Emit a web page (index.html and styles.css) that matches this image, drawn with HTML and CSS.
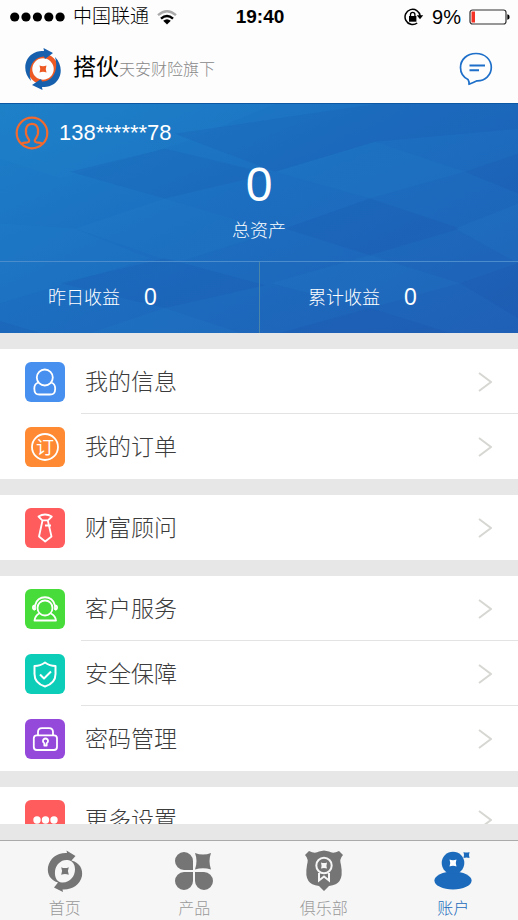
FILE: index.html
```html
<!DOCTYPE html>
<html lang="zh-CN">
<head>
<meta charset="utf-8">
<meta name="viewport" content="width=device-width, initial-scale=1">
<title>搭伙 - 账户</title>
<link rel="stylesheet" href="styles.css">
</head>
<body>
<div class="status">
  <div class="status-left">
    <svg width="55" height="10" viewBox="0 0 55 10"><circle cx="4.7" cy="5" r="4.6"/><circle cx="16" cy="5" r="4.6"/><circle cx="27.4" cy="5" r="4.6"/><circle cx="38.8" cy="5" r="4.6"/><circle cx="50.1" cy="5" r="4.6"/></svg>
    <span class="carrier">中国联通</span>
    <svg width="20" height="15" viewBox="0 0 20 15"><g fill="none" stroke-width="2.4"><path d="M1 5.2Q10-2.6 19 5.2" stroke="#aaa"/><path d="M4 8.6Q10 3.2 16 8.6" stroke="#000"/></g><path d="M6.2 10.8Q10 7.600 13.800 10.800L10 14.600Z"/></svg>
  </div>
  <span class="clock">19:40</span>
  <div class="status-right">
    <svg width="20" height="18" viewBox="0 0 20 18"><path d="M13.200 15A7.600 7.600 0 1 1 16.200 8" fill="none" stroke="#000" stroke-width="1.500"/><path d="M12.800 7.300h6.400L16 11.300Z"/><path d="M5 8h7.400v5.700H5Z"/><path d="M6.500 8V6.500a2.200 2.200 0 0 1 4.400 0V8" fill="none" stroke="#000" stroke-width="1.300"/></svg>
    <span class="percent">9%</span>
    <svg width="41" height="16" viewBox="0 0 41 16"><rect x="1" y="1" width="36" height="14" rx="2.500" fill="none" stroke="#333" stroke-width="1.200"/><rect x="2.500" y="2.500" width="3.500" height="11" fill="#f53226"/><path d="M38.300 5.200Q40.600 5.500 40.600 8T38.300 10.800Z"/></svg>
  </div>
</div>

<header class="header">
  <svg class="logo" width="36" height="44" viewBox="0 0 36 44">
    <circle cx="18" cy="22" r="13" fill="none" stroke="#ee5a24" stroke-width="4.500"/>
    <path d="M6 34C-3 25-1 11 9 6 13 4 16 4 19 4L18.500 1 28 6 20 12 19 9.500C8 10 2 21 6 34Z" fill="#1760ad"/>
    <path d="M30 10C39 19 37 33 27 38 23 40 20 40 17 40L17.500 43 7 38 16 32 17 34.500C28 34 34 23 30 10Z" fill="#1760ad"/>
    <path d="M14.500 18.500Q18 20 21.500 18.500 20 22 21.500 25.500 18 24 14.500 25.500 16 22 14.500 18.500Z" fill="#ee5a24"/>
  </svg>
  <h1 class="brand">搭伙<small>天安财险旗下</small></h1>
  <button class="message" type="button" aria-label="消息">
    <svg width="34" height="34" viewBox="0 0 34 34" fill="none" stroke="#1d6fc9" stroke-width="1.700"><path d="M9 27.500C4 25 1.500 20.500 1.500 15.500 1.500 7.500 8 1.500 17 1.500S32.300 7.500 32.300 15.500C32.300 23 26 29 18 28.800Q14.500 30.500 10 32.300 10.500 30 9 27.500Z" stroke-linejoin="round"/><path d="M10.500 13.500H26M10.500 18.300H20" stroke-width="1.900"/></svg>
  </button>
</header>

<section class="hero">
  <svg class="hero-art" viewBox="0 0 518 230" preserveAspectRatio="none">
    <g fill="#2a8fd0" fill-opacity=".12"><path d="M0 0H275L180 40 60 75 0 55Z"/><path d="M375 38L465 68 370 95 275 68Z"/><path d="M165 95L275 128 175 160 75 125Z"/><path d="M0 120L75 125 150 155 0 200Z"/><path d="M370 152L460 180 370 205 270 180Z"/><path d="M165 205L240 230H90Z"/><path d="M518 100V160L455 125Z"/></g>
    <g fill="#173f9f" fill-opacity=".11"><path d="M375 0H518V25L375 38 275 68 175 30Z"/><path d="M370 95L460 125 370 152 285 125Z"/><path d="M165 155L265 182 165 205 60 180Z"/><path d="M165 45L270 70 165 95 70 68Z"/><path d="M518 50V90L465 68Z"/><path d="M370 205L450 230H280Z"/><path d="M460 180L518 160V215Z"/><path d="M0 218L40 230H0Z"/></g>
  </svg>
  <div class="user">
    <svg width="34" height="34" viewBox="0 0 34 34" fill="none" stroke="#f26a2e" stroke-width="2.200"><circle cx="17" cy="17" r="15.300"/><path d="M6 28Q8 26.500 12.500 26.300C15 26 14.500 24 13 22.300 9.500 17 10 7.800 17 7.800S24.500 17 21 22.300C19.500 24 19 26 21.500 26.300Q26 26.500 28 28"/></svg>
    <span>138******78</span>
  </div>
  <div class="total"><strong>0</strong><span>总资产</span></div>
  <div class="earnings">
    <div class="earning"><span>昨日收益</span><b>0</b></div>
    <div class="earning"><span>累计收益</span><b>0</b></div>
  </div>
</section>

<main class="menu">
  <nav class="group">
    <a class="row" href="#info"><svg class="tile blue" viewBox="0 0 40 40"><circle cx="19.800" cy="15.500" r="8"/><path d="M13.300 20.500C10 21.500 9.300 23.500 9.300 26.500 9.300 31.500 11 32.500 14.500 32.500H25C28.500 32.500 30.200 31.500 30.200 26.500 30.200 23.500 29.500 21.500 26.200 20.500"/></svg><span class="label">我的信息</span><svg class="chevron" viewBox="0 0 14 20"><path d="M1 1L13 10 1 19"/></svg></a>
    <a class="row" href="#orders"><svg class="tile orange" viewBox="0 0 40 40"><circle cx="20" cy="20" r="13"/><text x="20" y="26.500">订</text></svg><span class="label">我的订单</span><svg class="chevron" viewBox="0 0 14 20"><path d="M1 1L13 10 1 19"/></svg></a>
  </nav>
  <nav class="group">
    <a class="row" href="#advisor"><svg class="tile red" viewBox="0 0 40 40"><path d="M13.500 8.500Q20 4.500 26.800 8.500L23 12.300H17.300ZM17.500 12.500L14 28.500 20.200 33.500 26.500 28.500 22.800 12.500M20 17.500H26"/></svg><span class="label">财富顾问</span><svg class="chevron" viewBox="0 0 14 20"><path d="M1 1L13 10 1 19"/></svg></a>
  </nav>
  <nav class="group">
    <a class="row" href="#service"><svg class="tile green" viewBox="0 0 40 40"><circle cx="20" cy="19" r="7.500"/><path d="M10 21C7 20 7.500 16.500 10 16.500 12 5.500 28 5.500 30 16.500 32.500 16.500 33 20 30 21M10 16.500V21M30 16.500V21M14 24.500Q10 27 9.500 31.500H31Q30.500 27 26 24.500"/></svg><span class="label">客户服务</span><svg class="chevron" viewBox="0 0 14 20"><path d="M1 1L13 10 1 19"/></svg></a>
    <a class="row" href="#security"><svg class="tile teal" viewBox="0 0 40 40"><path d="M20 8.500Q24.500 12 30.500 12V20C30.500 26 26.500 30.500 20 32.500 13.500 30.500 9.500 26 9.500 20V12Q15.500 12 20 8.500ZM15 20.500L19 24.500 26 17.500" stroke-width="2"/></svg><span class="label">安全保障</span><svg class="chevron" viewBox="0 0 14 20"><path d="M1 1L13 10 1 19"/></svg></a>
    <a class="row" href="#password"><svg class="tile purple" viewBox="0 0 40 40"><rect x="8.800" y="16.300" width="23.200" height="14.700" rx="3"/><path d="M13 16V13Q13 9.200 17 9.200H24Q28 9.200 28 13V16M19.300 24.200A2.500 2.500 0 1 1 21.700 24.200V26.500H19.300Z"/></svg><span class="label">密码管理</span><svg class="chevron" viewBox="0 0 14 20"><path d="M1 1L13 10 1 19"/></svg></a>
  </nav>
  <nav class="group">
    <a class="row" href="#settings"><svg class="tile red" viewBox="0 0 40 40"><g class="dots"><circle cx="12" cy="20" r="3.700"/><circle cx="20.500" cy="20" r="3.700"/><circle cx="29" cy="20" r="3.700"/></g></svg><span class="label">更多设置</span><svg class="chevron" viewBox="0 0 14 20"><path d="M1 1L13 10 1 19"/></svg></a>
  </nav>
</main>

<nav class="tabs">
  <a class="tab" href="#home"><svg viewBox="0 0 42 42"><path fill-rule="evenodd" d="M23 3L22.500 .5 31.500 6 27.500 10.500C36 13 39 19 38 26 36 35 28 40 18.500 39.500L19 42 10 37.500 14 32.500C6 30 3 24 4 17 6 8 13 2.500 23 3ZM25 10.300C18 8.500 12 14 11 21 10.500 28 13 32 18 32.500 26 33 31 26 31 19.500 31 14 28.500 11.300 25 10.300Z"/><path d="M17.200 17.200Q21 19 24.800 17.200 23 21 24.800 24.800 21 23 17.200 24.800 19 21 17.200 17.200Z"/></svg><span>首页</span></a>
  <a class="tab" href="#products"><svg viewBox="0 0 42 42"><path d="M20 20H11A9 9 0 1 1 20 11ZM20 22V31A9 9 0 1 1 11 22ZM22 22H31A9 9 0 1 1 22 31ZM22 3Q30 6 38 3 35 11 38 19.500 30 17 22 19.500 25 11 22 3Z"/></svg><span>产品</span></a>
  <a class="tab" href="#club"><svg viewBox="0 0 42 42"><path d="M6 1Q12 4 16 1.500L21 .5 26 1.500Q30 4 36 1L40 5Q36 9 38 15 40 26 36.500 31 34 35 26 36L21 41 16 36Q8 35 5.500 31 2 26 4 15 6 9 2 5Z"/><circle cx="21" cy="15.500" r="7.700" fill="none" stroke="#f6f6f6" stroke-width="2"/><path d="M18 12.500Q21 13.500 24 12.500 23 15.500 24 18.500 21 17.500 18 18.500 19 15.500 18 12.500Z" fill="#f6f6f6"/><path d="M16 23V30.500L21 26.500 26 30.500V23" fill="none" stroke="#f6f6f6" stroke-width="2"/></svg><span>俱乐部</span></a>
  <a class="tab active" href="#account" aria-current="page"><svg viewBox="0 0 42 42"><ellipse cx="21" cy="30.500" rx="18.600" ry="9"/><circle cx="21" cy="13" r="11.300"/><path d="M17.500 9.500Q21 11 24.500 9.500 23 13 24.500 16.500 21 15 17.500 16.500 19 13 17.500 9.500Z" fill="#fff"/><path d="M31.500 2Q34.500 3 37.500 2 36.500 5 37.500 8 34.500 7 31.500 8 32.500 5 31.500 2Z"/></svg><span>账户</span></a>
</nav>
</body>
</html>
```

FILE: styles.css
```css
* { box-sizing: border-box; }

body {
  margin: 0;
  height: 100vh;
  display: flex;
  flex-direction: column;
  overflow: hidden;
  background: #e7e7e7;
  color: #000;
  font-family: "Liberation Sans", "Noto Sans CJK SC", sans-serif;
}

a { color: inherit; text-decoration: none; }
svg { display: block; flex: none; }

.status {
  display: grid;
  grid-template-columns: 1fr auto 1fr;
  align-items: center;
  height: 34px;
  padding: 0 8px 0 10px;
  background: #fdfdfd;
}
.status-left, .status-right { display: flex; align-items: center; gap: 8px; }
.status-right { justify-content: flex-end; }
.carrier { font-size: 19px; line-height: 24px; font-weight: 300; }
.clock { font-size: 19px; font-weight: 700; }
.percent { font-size: 20px; }

.header {
  display: flex;
  align-items: center;
  height: 69px;
  padding: 0 25px;
  background: #fdfdfd;
}
.brand { margin: 0 0 0 12px; font-size: 23px; line-height: 32px; font-weight: 400; }
.brand small { font-size: 16px; font-weight: 300; color: #888; }
.message { margin-left: auto; padding: 0; border: 0; background: none; }

.hero {
  position: relative;
  border-top: 1px solid #0d58a4;
  background: linear-gradient(155deg, #1c80c8 0%, #1c6ec0 45%, #1f60b6 100%);
  color: #fff;
}
.hero-art { position: absolute; inset: 0; width: 100%; height: 100%; }
.user {
  position: relative;
  display: flex;
  align-items: center;
  gap: 10px;
  padding: 12px 15px 0;
  font-size: 22px;
}
.total {
  position: relative;
  display: flex;
  flex-direction: column;
  align-items: center;
  gap: 6px;
  height: 111px;
  padding-top: 7px;
}
.total strong { font-size: 48px; line-height: 56px; font-weight: 400; }
.total span, .earning span { font-size: 18px; line-height: 24px; font-weight: 300; }
.earnings {
  position: relative;
  display: grid;
  grid-template-columns: 1fr 1fr;
  border-top: 1px solid #4b8ccc;
}
.earning {
  display: flex;
  align-items: center;
  gap: 24px;
  height: 71px;
  padding-left: 48px;
}
.earning + .earning { border-left: 1px solid #4b85a8; }
.earning b { font-size: 23px; font-weight: 400; }

.menu {
  flex: 1;
  min-height: 0;
  margin-bottom: 16px;
  padding-top: 16px;
  overflow: hidden;
}
.group { margin-bottom: 16px; background: #fff; }
.row {
  position: relative;
  display: flex;
  align-items: center;
  gap: 20px;
  height: 65px;
  padding: 0 26px 0 25px;
}
.row + .row::before {
  content: "";
  position: absolute;
  top: -1px;
  left: 81px;
  right: 0;
  border-top: 1px solid #e3e3e3;
}
.label { flex: 1; font-size: 23px; line-height: 32px; font-weight: 300; color: #3c3c3c; }
.chevron { width: 14px; height: 20px; fill: none; stroke: #d6d6d2; stroke-width: 2; }

.tile {
  width: 40px;
  height: 40px;
  border-radius: 6px;
  fill: none;
  stroke: #fff;
  stroke-width: 1.8;
  stroke-linejoin: round;
}
.tile text { fill: #fff; stroke: none; font-size: 18px; text-anchor: middle; }
.tile .dots { fill: #fff; stroke: none; }
.blue { background: #4890f0; }
.orange { background: #ff8a33; }
.red { background: #ff5c5e; }
.green { background: #48dc3a; }
.teal { background: #0bcdb8; }
.purple { background: #9449db; }

.tabs {
  display: grid;
  grid-template-columns: repeat(4, 1fr);
  height: 80px;
  border-top: 1px solid #aaa;
  background: #f6f6f6;
}
.tab {
  display: flex;
  flex-direction: column;
  align-items: center;
  gap: 5px;
  padding-top: 9px;
  color: #999;
  font-size: 16px;
  line-height: 24px;
  font-weight: 300;
}
.tab svg { width: 42px; height: 42px; fill: #757575; }
.tab.active { color: #1b6abb; }
.tab.active svg { fill: #1b6abb; }
```
